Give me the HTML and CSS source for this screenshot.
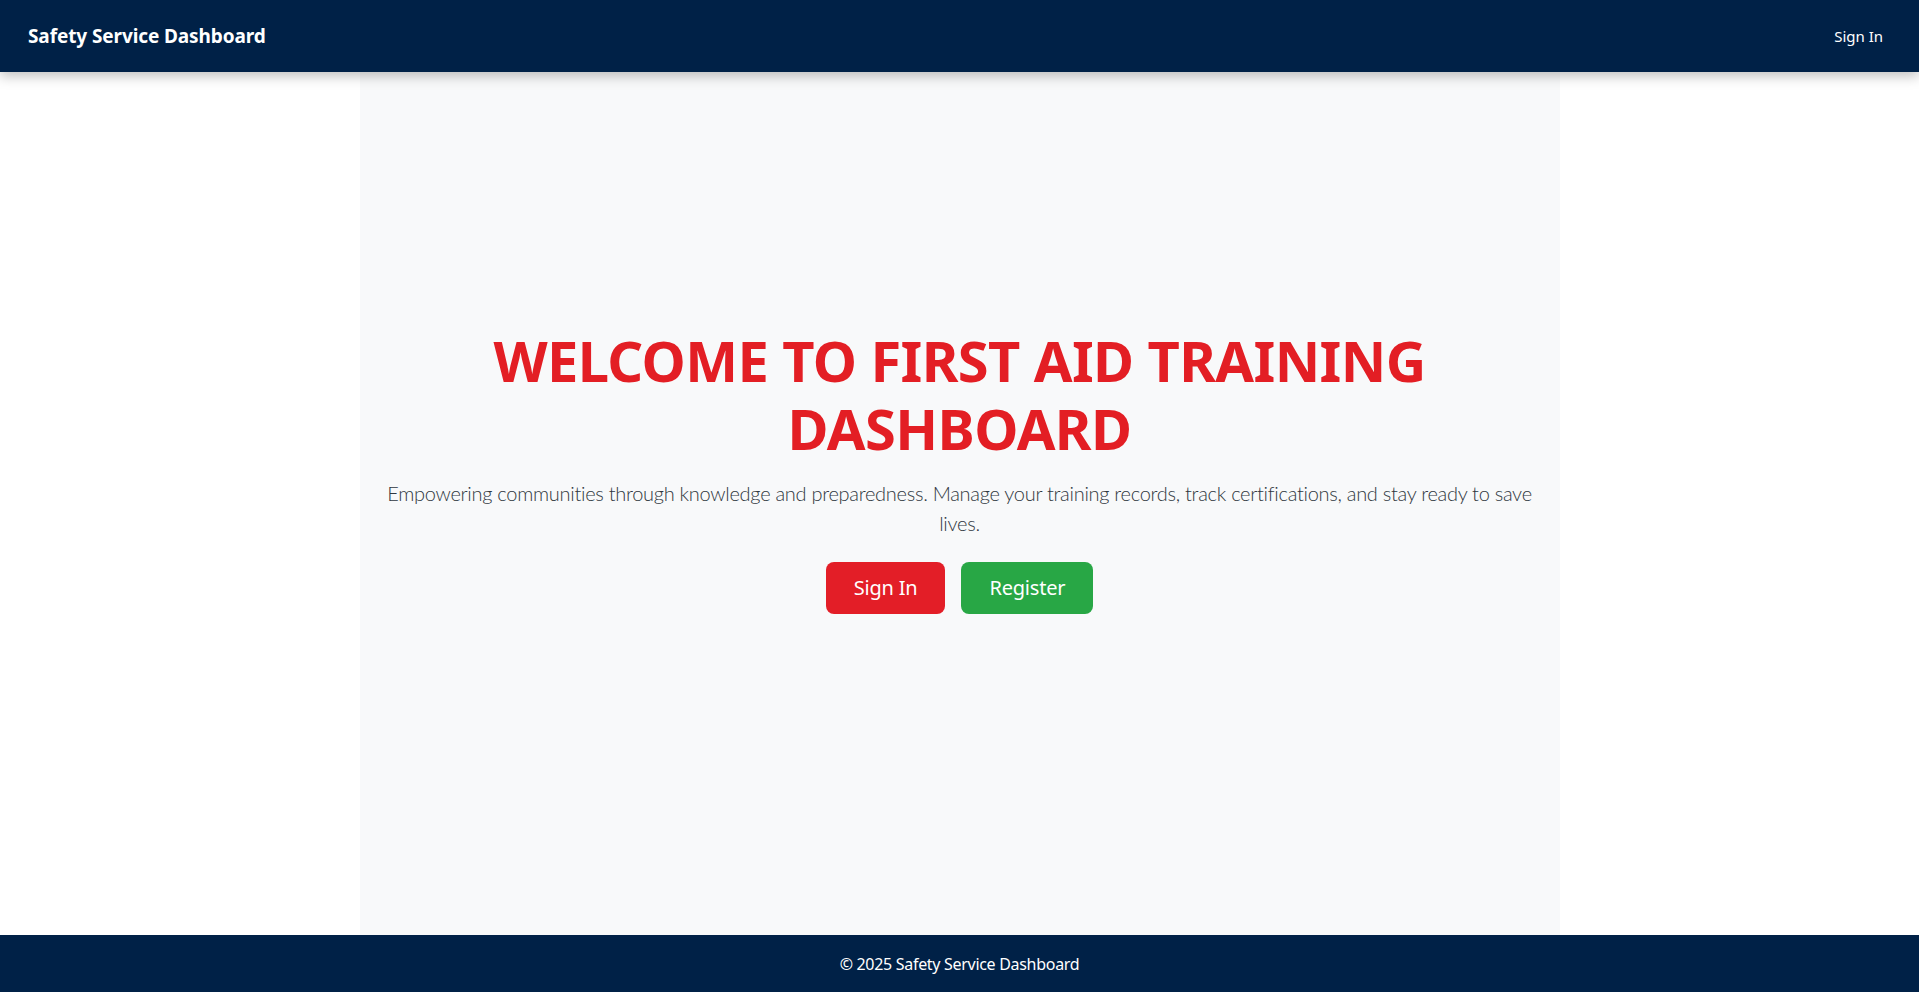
FILE: index.html
```html
<!DOCTYPE html>
<html lang="en">
<head>
<meta charset="utf-8">
<title>Safety Service Dashboard</title>
<link rel="stylesheet" href="styles.css">
</head>
<body>
<header class="navbar">
  <a class="brand" href="#">Safety Service Dashboard</a>
  <nav class="nav"><a class="nav-link" href="#">Sign In</a></nav>
</header>
<main class="main">
  <section class="hero">
    <h1 class="hero-title">WELCOME TO FIRST AID TRAINING DASHBOARD</h1>
    <p class="lead">Empowering communities through knowledge and preparedness. Manage your training records, track certifications, and stay ready to save lives.</p>
    <div class="actions">
      <a class="btn btn-red" href="#">Sign In</a>
      <a class="btn btn-green" href="#">Register</a>
    </div>
  </section>
</main>
<footer class="footer">© 2025 Safety Service Dashboard</footer>
</body>
</html>
```
FILE: styles.css
```css
* { box-sizing: border-box; }
html, body { height: 100%; }
body {
  margin: 0;
  font-family: "Noto Sans", "Open Sans", sans-serif;
  color: #212529;
  background: #fff;
  display: flex;
  flex-direction: column;
  min-height: 100vh;
}
a { text-decoration: none; }
.navbar {
  height: 72px;
  flex: none;
  background: #002147;
  display: flex;
  align-items: center;
  justify-content: space-between;
  padding: 0 24px 0 28px;
  box-shadow: 0 4px 12px rgba(0,0,0,0.25);
  position: relative;
  z-index: 2;
}
.brand {
  color: #fff;
  font-weight: 700;
  font-size: 19px;
  letter-spacing: -0.1px;
}
.nav-link {
  color: #fff;
  font-size: 15px;
  padding: 8px 12px;
}
.main {
  flex: 1;
  display: flex;
  justify-content: center;
}
.hero {
  width: 1200px;
  background: #f8f9fa;
  padding: 0 24px 66px;
  display: flex;
  flex-direction: column;
  align-items: center;
  justify-content: center;
  text-align: center;
}
.hero-title {
  margin: 0 0 16px;
  font-size: 56px;
  line-height: 1.2;
  font-weight: 700;
  letter-spacing: -0.6px;
  color: #e31e24;
  max-width: 960px;
}
.lead {
  margin: 0 0 24px;
  font-family: "Lato", "Noto Sans", sans-serif;
  font-size: 20px;
  line-height: 1.5;
  font-weight: 300;
  letter-spacing: -0.28px;
  color: #2f3740;
}
.actions {
  display: flex;
  gap: 16px;
}
.btn {
  display: inline-flex;
  align-items: center;
  justify-content: center;
  height: 52px;
  padding: 0 28px;
  border-radius: 8px;
  color: #fff;
  font-size: 20px;
  letter-spacing: -0.2px;
}
.btn-red { background: #e31e27; }
.btn-green { background: #28a745; }
.footer {
  flex: none;
  height: 57px;
  background: #002147;
  color: #fff;
  font-size: 16px;
  letter-spacing: -0.3px;
  display: flex;
  align-items: center;
  justify-content: center;
}
```
